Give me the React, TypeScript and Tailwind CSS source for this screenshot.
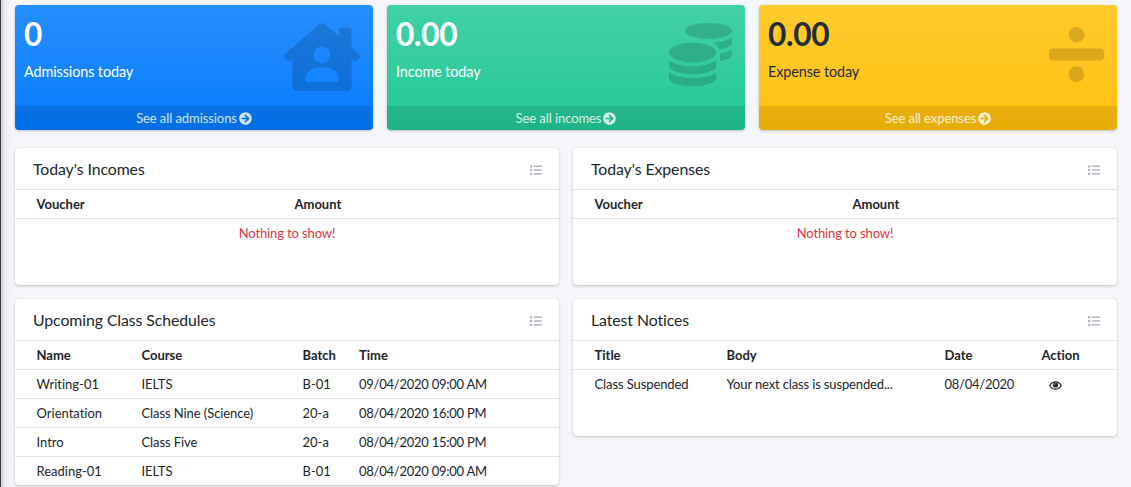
import type { ReactNode } from "react";
import {
  FaArrowCircleRight,
  FaCoins,
  FaDivide,
  FaHouseUser,
  FaList,
} from "react-icons/fa";

const incomeHeads = ["Voucher", "Amount"];

const schedules = [
  ["Writing-01", "IELTS", "B-01", "09/04/2020 09:00 AM"],
  ["Orientation", "Class Nine (Science)", "20-a", "08/04/2020 16:00 PM"],
  ["Intro", "Class Five", "20-a", "08/04/2020 15:00 PM"],
  ["Reading-01", "IELTS", "B-01", "08/04/2020 09:00 AM"],
];

type StatProps = {
  value: string;
  label: string;
  link: string;
  color: string;
  icon: ReactNode;
};

function StatBox({ value, label, link, color, icon }: StatProps) {
  return (
    <div className={`relative flex h-[125px] flex-col overflow-hidden rounded-[4px] shadow-[0_0_1px_rgba(0,0,0,.13),0_1px_3px_rgba(0,0,0,.2)] ${color}`}>
      <div className="flex-1 px-[9px] pt-[9px]">
        <h3 className="text-[31.68px] leading-[40px] font-bold tracking-[-0.3px]">{value}</h3>
        <p className="mt-[7px] text-[14.4px] leading-[22px] tracking-[-0.1px]">{label}</p>
      </div>
      {icon}
      <a href="#" className="flex h-6 items-center justify-center gap-[2px] bg-black/10 pt-px text-[13px] tracking-[-0.08px] text-white/80">
        {link} <FaArrowCircleRight className="-mt-px size-[13px]" />
      </a>
    </div>
  );
}

function Card({ title, className, children }: { title: string; className: string; children: ReactNode }) {
  return (
    <div className={`rounded-[4px] bg-white shadow-[0_0_1px_rgba(0,0,0,.13),0_1px_3px_rgba(0,0,0,.2)] ${className}`}>
      <div className="flex h-[42px] items-center justify-between border-b border-[#dee2e6] pr-[17px] pl-[18px]">
        <h3 className="text-[15.84px] leading-[19px] tracking-[-0.08px]">{title}</h3>
        <FaList className="mt-[3px] size-[12px] text-[#adb5bd]" />
      </div>
      {children}
    </div>
  );
}

function Eye() {
  return (
    <svg viewBox="0 0 13 9" className="mt-[2px] ml-[7px] h-[9px] w-[13px]" fill="none">
      <path d="M.7 4.5C2 2.2 4 .8 6.5 .8S11 2.2 12.3 4.5C11 6.8 9 8.2 6.5 8.2S2 6.8 .7 4.5Z" stroke="currentColor" strokeWidth="1.2" />
      <circle cx="6.5" cy="4" r="2.6" fill="currentColor" />
      <path d="M5.1 4A1.4 1.4 0 0 1 6.5 2.600" stroke="white" strokeWidth=".5" />
    </svg>
  );
}

const rowBase = "grid h-[29px] items-center pl-[21.5px] text-[13px]";
const headRow = "border-b border-[#dee2e6] pt-px font-bold";

function EmptyTable() {
  return (
    <>
      <div className={`${rowBase} ${headRow} grid-cols-[258px_1fr]`}>
        {incomeHeads.map((h) => (
          <span key={h}>{h}</span>
        ))}
      </div>
      <p className="h-[29px] text-center text-[13px] leading-[29px] tracking-[-0.12px] text-[#dc3545]">Nothing to show!</p>
    </>
  );
}

export default function App() {
  return (
    <div className="h-[487px] overflow-hidden border-l border-[#343a40] bg-[#f4f6f9] font-['Lato',sans-serif] text-[#212529] [font-variant-ligatures:none]">
      <div className="h-full bg-linear-to-r from-black/15 via-black/4 via-[4px] to-transparent to-[10px] pt-[5px] pr-[14px] pl-[14px]">
        {/* Totals */}
        <div className="grid grid-cols-3 gap-[14px]">
          <StatBox
            value="0"
            label="Admissions today"
            link="See all admissions"
            color="bg-linear-to-b from-[#268fff] to-[#007bff] text-white"
            icon={<FaHouseUser className="absolute top-[18px] right-[13px] h-[68px] w-[76px] text-black/15" />}
          />
          <StatBox
            value="0.00"
            label="Income today"
            link="See all incomes"
            color="bg-linear-to-b from-[#41d1a7] to-[#20c997] text-white"
            icon={<FaCoins className="absolute top-[18px] right-[13px] size-[63px] text-black/15" />}
          />
          <StatBox
            value="0.00"
            label="Expense today"
            link="See all expenses"
            color="bg-linear-to-b from-[#ffca2c] to-[#ffc107] text-[#1f2d3d]"
            icon={<FaDivide className="absolute top-[18px] right-[13px] h-[63px] w-[55px] text-black/15" />}
          />
        </div>

        <div className="mt-[18px] grid grid-cols-2 items-start gap-[14px]">
          {/* Incomes / Expenses */}
          <Card title="Today's Incomes" className="h-[137px]">
            <EmptyTable />
          </Card>
          <Card title="Today's Expenses" className="h-[137px]">
            <EmptyTable />
          </Card>

          {/* Class schedules */}
          <Card title="Upcoming Class Schedules" className="h-[186px]">
            <div className={`${rowBase} ${headRow} grid-cols-[105px_161px_56.5px_1fr]`}>
              <span>Name</span>
              <span>Course</span>
              <span>Batch</span>
              <span>Time</span>
            </div>
            {schedules.map(([name, course, batch, time]) => (
              <div key={name} className={`${rowBase} grid-cols-[105px_161px_56.5px_1fr] border-b border-[#dee2e6] pt-px last:border-transparent`}>
                <span>{name}</span>
                <span className="tracking-[-0.08px]">{course}</span>
                <span>{batch}</span>
                <span className="tracking-[-0.25px]">{time}</span>
              </div>
            ))}
          </Card>

          {/* Notices */}
          <Card title="Latest Notices" className="h-[137px]">
            <div className={`${rowBase} ${headRow} grid-cols-[132px_218px_97px_1fr]`}>
              <span>Title</span>
              <span>Body</span>
              <span>Date</span>
              <span>Action</span>
            </div>
            <div className={`${rowBase} grid-cols-[132px_218px_97px_1fr]`}>
              <span className="tracking-[-0.1px]">Class Suspended</span>
              <span className="tracking-[-0.14px]">Your next class is suspended...</span>
              <span className="tracking-[-0.25px]">08/04/2020</span>
              <Eye />
            </div>
          </Card>
        </div>
      </div>
    </div>
  );
}
